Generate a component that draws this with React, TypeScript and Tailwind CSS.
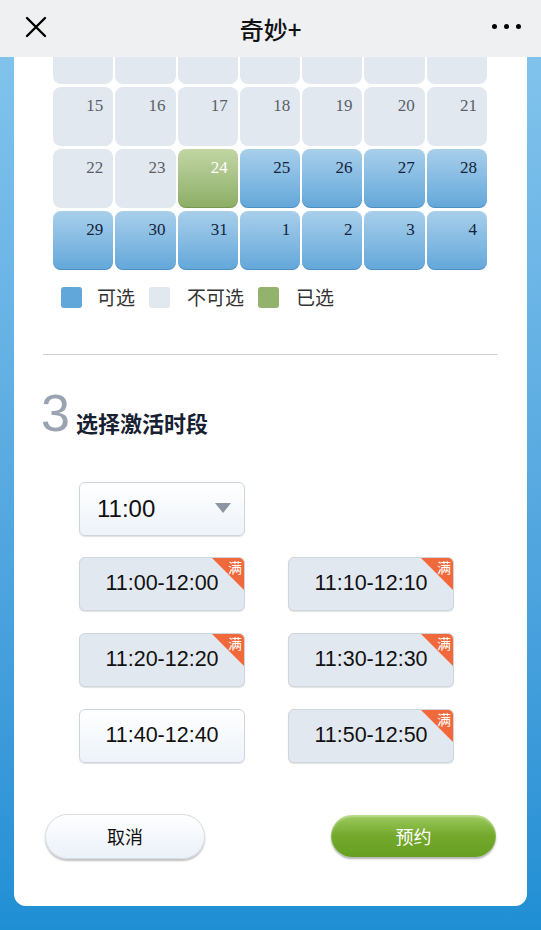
import React from "react";

type Day = { n: number | null; kind: "off" | "on" | "picked" };

const rows: Day[][] = [
  // first week is scrolled under the top bar, numbers not visible
  [0, 1, 2, 3, 4, 5, 6].map(() => ({ n: null, kind: "off" as const })),
  [15, 16, 17, 18, 19, 20, 21].map((n) => ({ n, kind: "off" as const })),
  [
    { n: 22, kind: "off" },
    { n: 23, kind: "off" },
    { n: 24, kind: "picked" },
    { n: 25, kind: "on" },
    { n: 26, kind: "on" },
    { n: 27, kind: "on" },
    { n: 28, kind: "on" },
  ],
  [29, 30, 31, 1, 2, 3, 4].map((n) => ({ n, kind: "on" as const })),
];

const slots = [
  { t: "11:00-12:00", full: true },
  { t: "11:10-12:10", full: true },
  { t: "11:20-12:20", full: true },
  { t: "11:30-12:30", full: true },
  { t: "11:40-12:40", full: false },
  { t: "11:50-12:50", full: true },
];

const cjk = "font-['Noto_Sans_CJK_SC',sans-serif]";

function Cell({ d }: { d: Day }) {
  const tone =
    d.kind === "off"
      ? "bg-[#e1e8f0] text-[#5a5f66]"
      : d.kind === "on"
      ? "bg-gradient-to-b from-[#a8cfeb] to-[#62a7d9] text-[#14233a] shadow-[inset_0_-1px_0_rgba(40,100,150,0.35)]"
      : "bg-gradient-to-b from-[#c2d6a4] to-[#8cae66] text-white shadow-[inset_0_-1px_0_rgba(80,110,40,0.35)]";
  return (
    <div
      className={`h-[59px] rounded-[8px] pr-[10px] pt-[9px] text-right font-['Liberation_Serif',serif] text-[17px] leading-[20px] ${tone}`}
    >
      {d.n}
    </div>
  );
}

function Slot({ t, full }: { t: string; full: boolean }) {
  return (
    <div
      className={`relative flex h-[54px] w-[166px] items-center justify-center overflow-hidden rounded-[6px] border border-[#cfd5dd] shadow-[0_1px_1px_rgba(0,0,0,0.12)] ${
        full ? "bg-[#e2e8f0]" : "bg-gradient-to-b from-white to-[#edf3f9]"
      }`}
    >
      <span className="font-['Liberation_Sans',sans-serif] text-[21.5px] text-[#111]">
        {t}
      </span>
      {full && (
        <div className="absolute right-0 top-0 h-[32px] w-[32px]">
          <svg width="32" height="32" viewBox="0 0 32 32" className="absolute inset-0">
            <polygon points="0,0 32,0 32,32" fill="#f1693a" />
          </svg>
          <span
            className={`absolute right-[2px] top-[1px] text-[14px] leading-[16px] text-white ${cjk}`}
          >
            满
          </span>
        </div>
      )}
    </div>
  );
}

export default function App() {
  return (
    <div className="flex h-[930px] w-[541px] flex-col overflow-hidden bg-gradient-to-b from-[#86c6ee] to-[#1f8fd4]">
      {/* top bar */}
      <div className="relative flex h-[57px] shrink-0 items-center justify-center bg-[#eff0f2]">
        <svg
          className="absolute left-[25px] top-[16px]"
          width="22"
          height="22"
          viewBox="0 0 22 22"
          stroke="#000"
          strokeWidth="2.4"
          strokeLinecap="round"
        >
          <path d="M2 2L20 20M20 2L2 20" />
        </svg>
        <span className={`text-[24px] font-medium text-[#111] ${cjk}`}>奇妙+</span>
        <div className="absolute right-[20px] top-[24px] flex gap-[7px]">
          <span className="h-[5px] w-[5px] rounded-full bg-black" />
          <span className="h-[5px] w-[5px] rounded-full bg-black" />
          <span className="h-[5px] w-[5px] rounded-full bg-black" />
        </div>
      </div>

      {/* card */}
      <div className="mx-[14px] flex h-[849px] flex-col overflow-hidden rounded-b-[12px] bg-white">
        <div className="-mt-[32px] ml-[39px] grid w-[434px] grid-cols-7 gap-x-[2px] gap-y-[3px]">
          {rows.flat().map((d, i) => (
            <Cell key={i} d={d} />
          ))}
        </div>

        <div className={`ml-[47px] mt-[13px] flex items-center text-[19px] text-[#333] ${cjk}`}>
          <span className="h-[21px] w-[21px] rounded-[3px] bg-[#62a7d9]" />
          <span className="ml-[15px]">可选</span>
          <span className="ml-[14px] h-[21px] w-[21px] rounded-[3px] bg-[#e1e8f0]" />
          <span className="ml-[17px]">不可选</span>
          <span className="ml-[14px] h-[21px] w-[21px] rounded-[3px] bg-[#93b36c]" />
          <span className="ml-[17px]">已选</span>
        </div>

        <div className="mx-[29px] mt-[42px] h-px bg-[#cfd2d6]" />

        <div className="ml-[27px] mt-[32px] flex items-end">
          <span className="font-['Liberation_Sans',sans-serif] text-[52px] font-light leading-[52px] text-[#9aa3b1]">
            3
          </span>
          <span className={`mb-[3px] ml-[6px] text-[22px] font-bold leading-[28px] text-[#172031] ${cjk}`}>
            选择激活时段
          </span>
        </div>

        <div className="ml-[65px] mt-[43px] flex h-[54px] w-[166px] items-center justify-between rounded-[6px] border border-[#cfd5dd] bg-gradient-to-b from-white to-[#edf3f9] pl-[17px] pr-[13px] shadow-[0_1px_1px_rgba(0,0,0,0.12)]">
          <span className="font-['Liberation_Sans',sans-serif] text-[24px] text-[#111]">11:00</span>
          <svg width="16" height="11" viewBox="0 0 16 11">
            <polygon points="0,0 16,0 8,10" fill="#8c95a3" />
          </svg>
        </div>

        <div className="ml-[65px] mt-[21px] grid w-[375px] grid-cols-[166px_166px] justify-between gap-y-[22px]">
          {slots.map((s) => (
            <Slot key={s.t} t={s.t} full={s.full} />
          ))}
        </div>

        <div className="mx-[31px] mt-[51px] flex items-center justify-between">
          <button
            className={`h-[45px] w-[160px] rounded-full border border-[#d8dde3] bg-gradient-to-b from-white to-[#eaf1f9] text-[18px] text-[#111] shadow-[0_2px_2px_rgba(0,0,0,0.25)] ${cjk}`}
          >
            取消
          </button>
          <button
            className={`h-[42px] w-[165px] rounded-full bg-gradient-to-b from-[#9ccb5c] via-[#74a82c] to-[#65a021] text-[18px] text-white shadow-[0_2px_2px_rgba(0,0,0,0.3),inset_0_2px_2px_rgba(255,255,255,0.35)] ${cjk}`}
          >
            预约
          </button>
        </div>
      </div>
    </div>
  );
}
